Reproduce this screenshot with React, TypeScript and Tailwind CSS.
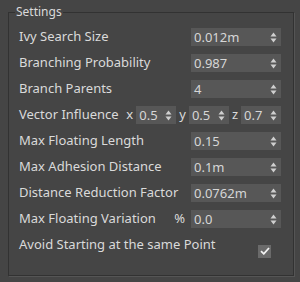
import React from 'react';

const font = { fontFamily: '"Noto Sans", "DejaVu Sans", sans-serif' };

function Spinner() {
  return (
    <svg width="7" height="11" viewBox="0 0 7 11" className="shrink-0">
      <path d="M3.5 0.5 L6.5 4.5 L0.5 4.5 Z" fill="#cfcfcf" />
      <path d="M0.5 6.5 L6.5 6.5 L3.5 10.5 Z" fill="#cfcfcf" />
    </svg>
  );
}

function NumberBox({ value, className }: { value: string; className: string }) {
  return (
    <div className={`h-[18px] bg-[#575757] flex items-center justify-between pl-[3px] pr-[4px] text-[13px] text-[#d6d6d6] ${className}`}>
      <span className="leading-none">{value}</span>
      <Spinner />
    </div>
  );
}

function Row({ label, children }: { label: string; children: React.ReactNode }) {
  return (
    <div className="h-[26px] flex items-center justify-between">
      <span>{label}</span>
      {children}
    </div>
  );
}

export default function App() {
  return (
    <div className="w-[300px] h-[282px] bg-[#454545] pt-[5px] pl-[8px] text-[13px] text-[#dadada]" style={font}>
      <fieldset className="w-[286px] h-[271px] border border-[#323232] shadow-[1px_1px_0_#555] pl-[10px] pr-[12px]">
        <legend className="-ml-[4px] px-[1px] text-[12px] leading-[14px]">Settings</legend>
        <div className="flex flex-col pt-[5px]">
          <Row label="Ivy Search Size">
            <NumberBox value="0.012m" className="w-[90px]" />
          </Row>
          <Row label="Branching Probability">
            <NumberBox value="0.987" className="w-[90px]" />
          </Row>
          <Row label="Branch Parents">
            <NumberBox value="4" className="w-[90px]" />
          </Row>
          <div className="h-[26px] flex items-center">
            <span>Vector Influence</span>
            <span className="ml-auto mr-[3px]">x</span>
            <NumberBox value="0.5" className="w-[40px]" />
            <span className="mx-[3px]">y</span>
            <NumberBox value="0.5" className="w-[40px]" />
            <span className="mx-[3px]">z</span>
            <NumberBox value="0.7" className="w-[40px]" />
          </div>
          <Row label="Max Floating Length">
            <NumberBox value="0.15" className="w-[90px]" />
          </Row>
          <Row label="Max Adhesion Distance">
            <NumberBox value="0.1m" className="w-[90px]" />
          </Row>
          <Row label="Distance Reduction Factor">
            <NumberBox value="0.0762m" className="w-[90px]" />
          </Row>
          <div className="h-[26px] flex items-center">
            <span>Max Floating Variation</span>
            <span className="ml-auto mr-[6px]">%</span>
            <NumberBox value="0.0" className="w-[90px]" />
          </div>
          <div className="h-[26px] flex items-center justify-between">
            <span>Avoid Starting at the same Point</span>
            <div className="w-[13px] h-[13px] bg-[#6a6a6a] mr-[10px] mt-[12px] flex items-center justify-center">
              <svg width="10" height="8" viewBox="0 0 10 8">
                <path d="M1 4.2 L3.8 6.8 L9 1" fill="none" stroke="#f2f2f2" strokeWidth="1.8" />
              </svg>
            </div>
          </div>
        </div>
      </fieldset>
    </div>
  );
}
